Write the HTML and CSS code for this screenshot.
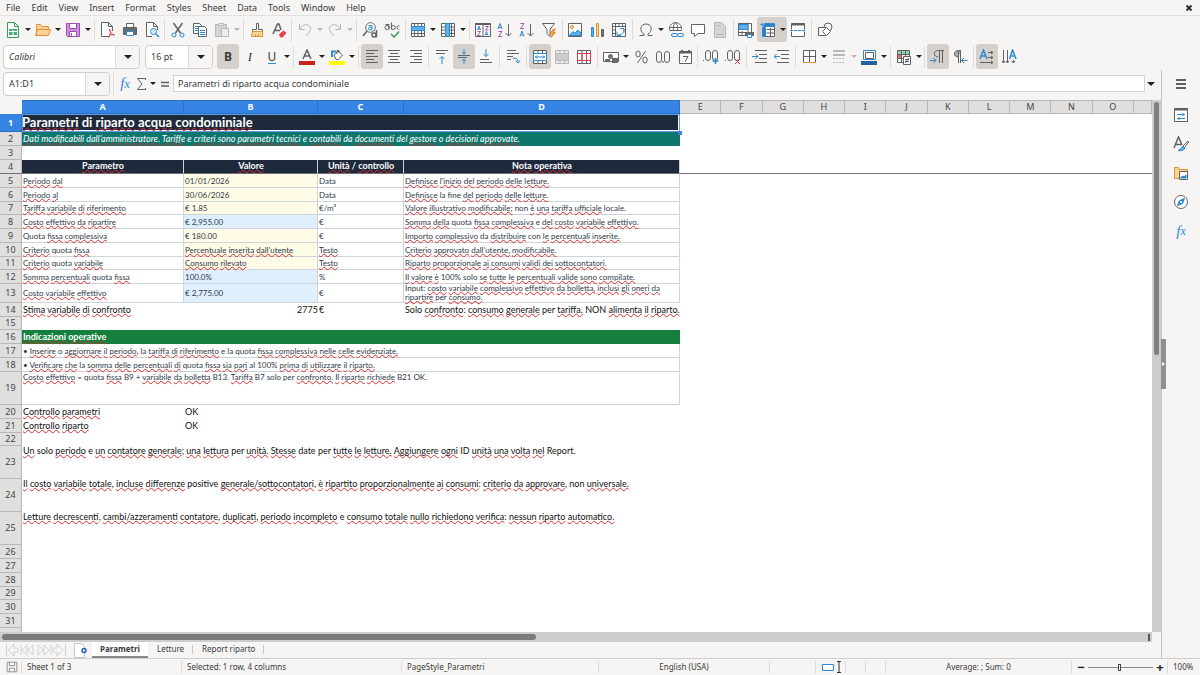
FILE: index.html
```html
<!DOCTYPE html>
<html lang="it">
<head>
<meta charset="utf-8">
<meta name="viewport" content="width=device-width, initial-scale=1">
<title>Parametri di riparto acqua condominiale</title>
<link rel="stylesheet" href="styles.css">
</head>
<body>
<header>
<nav class="menubar">
<button>File</button><button>Edit</button><button>View</button><button>Insert</button><button>Format</button><button>Styles</button><button>Sheet</button><button>Data</button><button>Tools</button><button>Window</button><button>Help</button>
<button class="close" aria-label="Close document"><svg class="ic small" viewBox="0 0 8 8"><path class="k w2" d="M1.5 1.5l5 5m0-5l-5 5"/></svg></button>
</nav>

<div class="toolbar standard">
<button class="tb" aria-label="New"><svg class="ic" viewBox="0 0 16 16"><path class="gn" fill="#fff" d="M2.500.5h7l4 4v11h-11z"/><path class="gn" d="M9.500.5v4h4"/><path fill="#44b171" stroke="none" d="M4 7h8v6H4z"/><path stroke="#fff" d="M4 9.500h8M8 8v5"/></svg></button><button class="dd" aria-label="New options"></button>
<button class="tb" aria-label="Open"><svg class="ic" viewBox="0 0 16 16"><path class="or" fill="#fbd495" d="M1.500 13.500v-11h4l2 2h6v3M.5 13.500l2-6h13l-2 6z"/></svg></button><button class="dd" aria-label="Open options"></button>
<button class="tb" aria-label="Save"><svg class="ic" viewBox="0 0 16 16"><path stroke="#9b4fb0" fill="#cf8edf" d="M1.500 1.500h13v13h-12l-1-1z"/><path stroke="#9b4fb0" fill="#fff" d="M4.500 1.500h7v5h-7zM4.500 9.500h7v5h-7z"/><path stroke="#9b4fb0" d="M6.500 11v3.500"/></svg></button><button class="dd" aria-label="Save options"></button>
<i class="sep"></i>
<button class="tb" aria-label="Export as PDF"><svg class="ic" viewBox="0 0 16 16"><path fill="#fff" d="M12.500 9V4.500l-4-4h-7v14h7M8.500.5v4h4"/><path class="rd" d="M9.500 7c1 4 2 5 5 6-3-1-5 0-6 2.500 2-3 2.500-5 1-8.500z"/></svg></button>
<button class="tb" aria-label="Print"><svg class="ic" viewBox="0 0 16 16"><path fill="#fff" d="M4.500 1.500h7v4h-7z"/><path fill="#666c72" d="M1.500 5.500h13v7h-13z"/><path class="b" fill="#fff" d="M4.500 9.500h7v4h-7z"/></svg></button>
<button class="tb" aria-label="Print preview"><svg class="ic" viewBox="0 0 16 16"><path fill="#fff" d="M13.500 8V4.500l-4-4h-7v14H8M9.500.5v4h4"/><circle class="b" fill="#d6ecfa" cx="9.500" cy="9.500" r="3"/><path class="b w15" d="M12 12l3 3"/></svg></button>
<i class="sep"></i>
<button class="tb" aria-label="Cut"><svg class="ic" viewBox="0 0 16 16"><path class="w15" d="M3.500 1l7 10M12.500 1l-7 10"/><circle class="b" cx="4" cy="13" r="2"/><circle class="b" cx="12" cy="13" r="2"/></svg></button>
<button class="tb" aria-label="Copy"><svg class="ic" viewBox="0 0 16 16"><path fill="#fff" d="M1.500 1.500h6l2 2v8h-8z"/><path fill="#fff" d="M6.500 4.500h6l2 2v8h-8z"/><path class="b" d="M3 4.500h3M3 6.500h3M3 8.500h3M8 8.500h5M8 10.500h5M8 12.500h5"/></svg></button>
<button class="tb" aria-label="Paste"><svg class="ic" viewBox="0 0 16 16"><path class="lg" fill="#d5d5d3" d="M1.500 2.500h11v12h-11z"/><path class="lg" fill="#eee" d="M4.500 1.500h5v2h-5zM7.500 6.500h7v8h-7z"/></svg></button><button class="dd off" aria-label="Paste options"></button>
<i class="sep"></i>
<button class="tb" aria-label="Clone formatting"><svg class="ic" viewBox="0 0 16 16"><path fill="#fff" d="M7.500 1.500h2v6h4v2h-10v-2h4z"/><path class="or" fill="#fbd495" d="M3.500 9.500h10v5h-11zM6.500 12v2M9.500 12v2"/></svg></button>
<button class="tb" aria-label="Clear formatting"><svg class="ic" viewBox="0 0 16 16"><path class="w15" d="M2 12L6.500 2H8l2 6M4 8.500h5"/><path fill="#e8404a" stroke="#e8404a" d="M8.500 12.500l4-3.500 2.500 2-3.500 4h-2z"/></svg></button>
<i class="sep"></i>
<button class="tb" aria-label="Undo"><svg class="ic" viewBox="0 0 16 16"><path class="lg" d="M2.500 2v5.500H8M3 7c2-4 5-5 8-4 4 2 3 6-2 11"/></svg></button><button class="dd off" aria-label="Undo list"></button>
<button class="tb" aria-label="Redo"><svg class="ic" viewBox="0 0 16 16"><path class="lg" d="M13.500 2v5.500H8M13 7c-2-4-5-5-8-4-4 2-3 6 2 11"/></svg></button><button class="dd off" aria-label="Redo list"></button>
<i class="sep"></i>
<button class="tb" aria-label="Find and replace"><svg class="ic" viewBox="0 0 16 16"><circle fill="#fff" cx="8.500" cy="5.500" r="4.800"/><path class="w15" d="M5 9l-4 5"/><circle class="b" cx="8" cy="6.500" r="1.500"/><path class="b" d="M6.500 3.500h3.500v5"/><circle class="w15" cx="12" cy="13" r="2"/><path class="w15" d="M14.500 8v7.500"/></svg></button>
<button class="tb" aria-label="Spelling"><svg class="ic" viewBox="0 0 16 16"><circle cx="3" cy="5.500" r="2"/><path d="M1.500 2.500h3.500v5M7.500.5v7"/><circle cx="9.300" cy="5.500" r="2"/><path d="M15.500 4c-3-1.500-3.500 4-.2 3.300"/><path class="gn w15" d="M7 12l3 3 5-5.500"/></svg></button>
<i class="sep"></i>
<button class="tb" aria-label="Row"><svg class="ic" viewBox="0 0 16 16"><path fill="#fff" d="M1.500 1.500h13v13h-13zM1.500 11.500h13M4.500 1.500v13M8 1.500v13M11.500 1.500v13"/><path class="b" fill="#5fb0ea" d="M1.500 4.500h13v4h-13z"/></svg></button><button class="dd" aria-label="Row options"></button>
<button class="tb" aria-label="Column"><svg class="ic" viewBox="0 0 16 16"><path fill="#fff" d="M1.500 1.500h13v13h-13zM1.500 5h13M1.500 8h13M1.500 11.500h13M11.500 1.500v13"/><path class="b" fill="#5fb0ea" d="M5.500 1.500h4v13h-4z"/></svg></button><button class="dd" aria-label="Column options"></button>
<i class="sep"></i>
<button class="tb" aria-label="Sort"><svg class="ic" viewBox="0 0 16 16"><path fill="#fff" d="M.5 1.500h15v13H.5zM8 2v12"/><path class="w2" d="M.5 2h15"/><path class="b" d="M2.500 8l1.500-4 1.500 4M3 7h2M10 13.500l1.500-4 1.500 4M10.500 12.500h2"/><path class="pu" d="M2.500 9.500h3l-3 4h3M10.500 4.500h3l-3 3.500h3"/></svg></button>
<button class="tb" aria-label="Sort ascending"><svg class="ic" viewBox="0 0 16 16"><path class="b" d="M1 7l2-5.500L5 7M2 5.500h2"/><path class="pu" d="M1.500 9.500h3.500l-3.500 5H5"/><path d="M11.500 2v12M8.500 11l3 3 3-3"/></svg></button>
<button class="tb" aria-label="Sort descending"><svg class="ic" viewBox="0 0 16 16"><path class="pu" d="M1.500 1.500H5l-3.500 5H5"/><path class="b" d="M1 14.500L3 9l2 5.500M2 13h2"/><path d="M11.500 2v12M8.500 11l3 3 3-3"/></svg></button>
<button class="tb" aria-label="AutoFilter"><svg class="ic" viewBox="0 0 16 16"><path fill="#fff" d="M1.500 1.500h12l-4.500 6v7l-3-3v-4z"/><path class="or" fill="#f59b23" d="M12.500 7l-4 5h3l-1.500 3.500 4.500-5h-2.500l2.500-3.500z"/></svg></button>
<i class="sep"></i>
<button class="tb" aria-label="Insert image"><svg class="ic" viewBox="0 0 16 16"><path fill="#fff" d="M1.500 1.500h13v13h-13z"/><circle class="or" fill="#fbd495" cx="5" cy="5" r="1.500"/><path class="b" fill="#5fb0ea" d="M2 13.500l4-4 2 1.500 3-3 3 3v2.500z"/></svg></button>
<button class="tb" aria-label="Insert chart"><svg class="ic" viewBox="0 0 16 16"><path class="b" fill="#5fb0ea" d="M2.500 5.500h2v9h-2z"/><path class="or" fill="#fbd495" d="M7.500 1.500h2v13h-2z"/><path fill="#777" d="M12.500 7.500h2v7h-2z"/></svg></button>
<button class="tb" aria-label="Insert pivot table"><svg class="ic" viewBox="0 0 16 16"><path fill="#fff" d="M1.500 1.500h13v13h-13zM1.500 4.500h13M4.500 1.500v13M8 2v2M11.500 2v2M2 8h2M2 11.500h2"/><path class="b" d="M9 6.500h4v4M6 9.500v4h4M13 7c0 4-2 6-6 6"/></svg></button>
<i class="sep"></i>
<button class="tb" aria-label="Special character"><svg class="ic" viewBox="0 0 16 16"><path d="M1.500 13.500H6v-1.500C1 9 2 2 8 2s7 7 2 10v1.500h4.500"/></svg></button><button class="dd" aria-label="Recent characters"></button>
<button class="tb" aria-label="Hyperlink"><svg class="ic" viewBox="0 0 16 16"><path fill="#fff" d="M2 9a6 6 0 1 1 11 0M2 5.500h11M2 8.500h11M7.500.5C5 3 5 7 6 9M7.500.5C10 3 10 7 9 9"/><rect class="b" x="3.500" y="11.500" width="6" height="3" rx="1.500"/><rect class="b" x="9.500" y="11.500" width="6" height="3" rx="1.500"/></svg></button>
<button class="tb" aria-label="Comment"><svg class="ic" viewBox="0 0 16 16"><path fill="#fff" d="M1.500 2.500h13v9H8l-3.500 3v-3h-3z"/></svg></button>
<button class="tb" aria-label="Headers and footers"><svg class="ic" viewBox="0 0 16 16"><path class="lg" fill="#d5d5d3" d="M2.500.5h7l4 4v11h-11z"/><path class="lg" d="M4.500 3.500h4M4.500 12.500h7"/></svg></button>
<i class="sep"></i>
<button class="tb" aria-label="Print area"><svg class="ic" viewBox="0 0 16 16"><path fill="#fff" d="M.5 1.500h13v12H.5zM.5 10.500h13M4 9v5M10 1.500v9"/><path class="b" fill="#5fb0ea" d="M1 2.500h9v5H1z"/><path fill="#666c72" d="M7.500 10.500h8v3h-8z"/><path class="b" fill="#fff" d="M9.500 12.500h4v3h-4z"/></svg></button>
<span class="on split"><button class="tb" aria-label="Freeze rows and columns"><svg class="ic" viewBox="0 0 16 16"><path fill="#fff" d="M3.500 3.500h11v11h-11zM6.500 7.500h8M6.500 11h8M10.500 6v8"/><path class="b" fill="#2b7fc4" d="M4.500 1.500h10v3h-10zM2.500 5.500h3v9h-3z"/><path class="b" d="M.5 2.500h3M2 1v3"/></svg></button><button class="dd" aria-label="Freeze options"></button></span>
<button class="tb" aria-label="Split window"><svg class="ic" viewBox="0 0 16 16"><path fill="#fff" d="M1.500 1.500h13v13h-13z"/><path class="w2" d="M1.500 2.500h13"/><path stroke="#f6f5f4" class="w2" d="M0 8.500h16"/><path class="b" stroke-dasharray="3 1" d="M0 8.500h16"/></svg></button>
<i class="sep"></i>
<button class="tb" aria-label="Show draw functions"><svg class="ic" viewBox="0 0 16 16"><circle cx="11" cy="5" r="4"/><path fill="#f6f5f4" d="M1.500 5.500h7v8h-7z"/><path fill="#fff" d="M9.500 5.500l4 4-4 4-4-4z"/></svg></button>
</div>

<div class="toolbar formatting">
<div class="combo fontname"><input aria-label="Font name" value="Calibri"><button aria-label="Font list"></button></div>
<div class="combo fontsize"><input aria-label="Font size" value="16 pt"><button aria-label="Size list"></button></div>
<button class="tb on bold">B</button>
<button class="tb ital">I</button>
<button class="tb under"><span>U</span></button><button class="dd" aria-label="Underline options"></button>
<i class="sep"></i>
<button class="tb" aria-label="Font color"><svg class="ic" viewBox="0 0 16 16"><path class="w15" d="M4 10l4-9 4 9M5.500 7h5"/><path fill="#c9211e" stroke="none" d="M0 12h16v4H0z"/></svg></button><button class="dd" aria-label="Font color options"></button>
<button class="tb" aria-label="Background color"><svg class="ic" viewBox="0 0 16 16"><path fill="#fff" d="M5 6l4-4 4.500 4-4 4.500H7z"/><path d="M8 5V1.500h2V4"/><path class="b w2" d="M3 8V2.500h4"/><path fill="#ff0" stroke="none" d="M0 12h16v4H0z"/></svg></button><button class="dd" aria-label="Background color options"></button>
<i class="sep"></i>
<button class="tb on" aria-label="Align left"><svg class="ic" viewBox="0 0 16 16"><path d="M2 1.500h12M2 4.500h8M2 7.500h12M2 10.500h8M2 13.500h12"/></svg></button>
<button class="tb" aria-label="Center"><svg class="ic" viewBox="0 0 16 16"><path d="M2 1.500h12M4 4.500h8M2 7.500h12M4 10.500h8M2 13.500h12"/></svg></button>
<button class="tb" aria-label="Align right"><svg class="ic" viewBox="0 0 16 16"><path d="M2 1.500h12M6 4.500h8M2 7.500h12M6 10.500h8M2 13.500h12"/></svg></button>
<i class="sep"></i>
<button class="tb" aria-label="Align top"><svg class="ic" viewBox="0 0 16 16"><path d="M2 1.500h12M2 4.500h9"/><path class="b" d="M8 15V7.500M5.500 10L8 7.500l2.500 2.500"/></svg></button>
<button class="tb on" aria-label="Center vertically"><svg class="ic" viewBox="0 0 16 16"><path d="M2 6.500h12M2 8.500h9"/><path class="b" d="M8 0v5M6 3l2 2 2-2M8 15v-5M6 12l2-2 2 2"/></svg></button>
<button class="tb" aria-label="Align bottom"><svg class="ic" viewBox="0 0 16 16"><path d="M2 10.500h9M2 13.500h12"/><path class="b" d="M8 0v7.500M5.500 5L8 7.500 10.500 5"/></svg></button>
<i class="sep"></i>
<button class="tb" aria-label="Wrap text"><svg class="ic" viewBox="0 0 16 16"><path d="M2 1.500h9M2 4.500h12M2 7.500h6M2 10.500h4"/><path class="b" d="M8 9.500c3-1 5 0 5 4M10.500 11.500l2.500 2.500 2-2.500"/></svg></button>
<i class="sep"></i>
<button class="tb on" aria-label="Merge and center"><svg class="ic" viewBox="0 0 16 16"><path fill="#fff" d="M1.500 1.500h13v13h-13zM6 1.500v13M10.500 1.500v13M1.500 4.500h13M1.500 11.500h13"/><path class="b" fill="#fff" d="M1.500 4.500h13v7h-13zM3 8h10M5 6.500L3.500 8 5 9.500M11 6.500L12.500 8 11 9.500"/></svg></button>
<button class="tb" aria-label="Merge cells"><svg class="ic" viewBox="0 0 16 16"><path class="lg" fill="#eee" d="M1.500 1.500h13v13h-13zM6 1.500v3M10.500 1.500v3M6 11.500v3M10.500 11.500v3"/><path class="lg" fill="#ccc" d="M1.500 4.500h13v7h-13z"/></svg></button>
<button class="tb" aria-label="Unmerge cells"><svg class="ic" viewBox="0 0 16 16"><path fill="#fff" d="M1.500 1.500h13v13h-13zM6 1.500v13M10.500 1.500v13"/><path class="rd" d="M1.500 4.500h13v7h-13zM6 4.500v7M10.500 4.500v7"/></svg></button>
<i class="sep"></i>
<button class="tb" aria-label="Currency"><svg class="ic" viewBox="0 0 16 16"><path fill="#fff" d="M.5 3.500h15v9H.5z"/><circle fill="#777" cx="7.500" cy="7.500" r="2"/><path fill="#666c72" d="M9.500 9.500h5v4h-5zM2.500 10.500h4v2h-4z"/></svg></button><button class="dd" aria-label="Currency options"></button>
<button class="tb" aria-label="Percent"><svg class="ic" viewBox="0 0 16 16"><path d="M12.500 2l-8 12"/><ellipse cx="5" cy="5" rx="2.200" ry="3"/><ellipse cx="12" cy="11" rx="2.200" ry="3"/></svg></button>
<button class="tb" aria-label="Number"><svg class="ic" viewBox="0 0 16 16"><rect x="1.500" y="2.500" width="5" height="11" rx="2.500"/><rect x="9.500" y="2.500" width="5" height="11" rx="2.500"/><path d="M8 12v2"/></svg></button>
<button class="tb" aria-label="Date"><svg class="ic" viewBox="0 0 16 16"><path fill="#fff" d="M2.500 2.500h12v12h-12z"/><path class="w2" d="M2 3.500h13M5 1v3M12 1v3"/><path d="M6 7.500h5l-3 5.500"/></svg></button>
<i class="sep"></i>
<button class="tb" aria-label="Add decimal place"><svg class="ic" viewBox="0 0 16 16"><rect x="2.500" y="1.500" width="5" height="10" rx="2.500"/><rect x="9.500" y="1.500" width="5" height="10" rx="2.500"/><path d="M0 11.500h1"/><path class="b w15" d="M12.500 9v6M9.500 12h6"/></svg></button>
<button class="tb" aria-label="Delete decimal place"><svg class="ic" viewBox="0 0 16 16"><rect x="2.500" y="1.500" width="5" height="10" rx="2.500"/><rect x="9.500" y="1.500" width="5" height="10" rx="2.500"/><path d="M0 11.500h1"/><path class="rd" d="M10 10l5 5m0-5l-5 5"/></svg></button>
<i class="sep"></i>
<button class="tb" aria-label="Increase indent"><svg class="ic" viewBox="0 0 16 16"><path d="M3 1.500h12M7 5.500h8M7 9.500h8M3 13.500h12"/><path class="b" d="M0 7.500h6M3.500 5L6 7.500 3.500 10"/></svg></button>
<button class="tb" aria-label="Decrease indent"><svg class="ic" viewBox="0 0 16 16"><path d="M3 1.500h12M7 5.500h8M7 9.500h8M3 13.500h12"/><path class="b" d="M0 7.500h6M2.500 5L0 7.500 2.500 10"/></svg></button>
<i class="sep"></i>
<button class="tb" aria-label="Borders"><svg class="ic" viewBox="0 0 16 16"><path fill="#fff" d="M2.500 1.500h12v12h-12zM8.500 1.500v12M2.500 7.500h12"/><path class="or" d="M2 13.500h13"/></svg></button><button class="dd" aria-label="Borders options"></button>
<button class="tb" aria-label="Border style"><svg class="ic" viewBox="0 0 16 16"><path class="lg w2" d="M2 2h12M2 6h12"/><path class="lg" stroke-dasharray="2 1" d="M2 9.500h12M2 13.500h12"/></svg></button><button class="dd off" aria-label="Border style options"></button>
<button class="tb" aria-label="Border color"><svg class="ic" viewBox="0 0 16 16"><path class="b" fill="#fff" d="M2.500 1.500h12v9h-12z"/><path d="M4.500 3.500h8v6h-8z"/><path fill="#23629f" stroke="none" d="M0 12h16v4H0z"/></svg></button><button class="dd" aria-label="Border color options"></button>
<i class="sep"></i>
<button class="tb" aria-label="Conditional formatting"><svg class="ic" viewBox="0 0 16 16"><path fill="#8fd5a6" stroke="none" d="M1 1h12v4H1z"/><path fill="#ee6c6c" stroke="none" d="M1 5h4v5H1z"/><path d="M1.500 1.500h12v12h-12zM5.500 1.500v12M9.500 1.500v12M1.500 5.500h12M1.500 9.500h12"/><path fill="#fff" d="M7.500 7.500h7v8h-7zM9 10.500h4M9 12.500h4M12.500 9l-3 5"/></svg></button><button class="dd" aria-label="Conditional options"></button>
<i class="sep"></i>
<button class="tb on" aria-label="Left to right"><svg class="ic" viewBox="0 0 16 16"><path d="M8.500 8C3 8 3 1.500 8.500 1.500H14M9.500 2v12M12.500 2v12"/><path class="b" d="M0 11.500h6M3.500 9L6 11.500 3.500 14"/></svg></button>
<button class="tb" aria-label="Right to left"><svg class="ic" viewBox="0 0 16 16"><path fill="#aaa" d="M6.500 8C1 8 1 1.500 6.500 1.500H9M6.500 2v12M8.500 2v12"/><path class="b" d="M9.500 11.500h6M12 9l-2.500 2.500L12 14"/></svg></button>
<i class="sep"></i>
<button class="tb on" aria-label="Text direction horizontal"><svg class="ic" viewBox="0 0 16 16"><path class="b w15" d="M1 10l3.500-9L8 10M2.500 7h4"/><path d="M9 3.500h5M9 8.500h5M1 13.500h13M12 2l2 1.500L12 5M12 7l2 1.500-2 1.500M12 12l2 1.500-2 1.500"/></svg></button>
<button class="tb" aria-label="Text direction vertical"><svg class="ic" viewBox="0 0 16 16"><path class="b w15" d="M8.500 10l3-9 3.500 9M10 7h4"/><path d="M2.500 1v13M6.500 1v13M12.500 11v3M1 12l1.500 2L4 12M5 12l1.500 2L8 12M11 12l1.500 2 1.500-2"/></svg></button>
</div>
</header>

<div class="work">
<main class="doc">
<div class="formulabar">
<div class="combo namebox"><input aria-label="Name box" value="A1:D1"><button aria-label="Names"></button></div>
<i class="sep"></i>
<button class="fx" aria-label="Function wizard">f<sub>x</sub></button>
<button class="tool" aria-label="Sum"><svg class="ic" viewBox="0 0 16 16"><path d="M12.500 4V2.500h-8L9 8l-4.500 5.500h8V12"/></svg></button><button class="dd" aria-label="Sum options"></button>
<button class="tool eq" aria-label="Formula"><svg class="ic" viewBox="0 0 16 16"><path class="w15" d="M4 6.500h8M4 10h8"/></svg></button>
<input class="formula" aria-label="Input line" value="Parametri di riparto acqua condominiale">
<button class="expand" aria-label="Expand formula bar"></button>
</div>

<div class="sheetarea">
<div class="sheet">
<table>
<colgroup><col class="c0"><col class="ca"><col class="cb"><col class="cc"><col class="cd"><col><col><col><col><col><col><col><col><col><col><col><col class="ce"></colgroup>
<thead><tr><th class="corner"></th><th class="sel">A</th><th class="sel">B</th><th class="sel">C</th><th class="sel">D</th><th>E</th><th>F</th><th>G</th><th>H</th><th>I</th><th>J</th><th>K</th><th>L</th><th>M</th><th>N</th><th>O</th><th></th></tr></thead>
<tbody>
<tr class="r18"><th class="sel">1</th><td colspan="4" class="title"><u>Parametri</u> di <u>riparto</u> <u>acqua</u> <u>condominiale</u><i class="handle"></i></td></tr>
<tr><th>2</th><td colspan="4" class="subtitle"><u>Dati</u> <u>modificabili</u> <u>dall’amministratore.</u> <u>Tariffe</u> e <u>criteri</u> <u>sono</u> <u>parametri</u> <u>tecnici</u> e <u>contabili</u> da <u>documenti</u> del <u>gestore</u> o <u>decisioni</u> <u>approvate.</u></td></tr>
<tr><th>3</th></tr>
<tr class="heads"><th>4</th><td><u>Parametro</u></td><td><u>Valore</u></td><td><u>Unità</u> / <u>controllo</u></td><td><u>Nota</u> <u>operativa</u></td><td colspan="12" class="rest"></td></tr>
<tr class="bx"><th>5</th><td><u>Periodo</u> <u>dal</u></td><td class="ye">01/01/2026</td><td>Data</td><td><u>Definisce</u> <u>l’inizio</u> <u>del</u> <u>periodo</u> <u>delle</u> <u>letture.</u></td></tr>
<tr class="bx"><th>6</th><td><u>Periodo</u> <u>al</u></td><td class="ye">30/06/2026</td><td>Data</td><td><u>Definisce</u> la fine <u>del</u> <u>periodo</u> <u>delle</u> <u>letture.</u></td></tr>
<tr class="bx r13"><th>7</th><td><u>Tariffa</u> <u>variabile</u> <u>di</u> <u>riferimento</u></td><td class="ye">€ 1.85</td><td>€/m³</td><td><u>Valore</u> <u>illustrativo</u> <u>modificabile;</u> non <u>è</u> <u>una</u> <u>tariffa</u> <u>ufficiale</u> locale.</td></tr>
<tr class="bx"><th>8</th><td><u>Costo</u> <u>effettivo</u> <u>da</u> <u>ripartire</u></td><td class="bl">€ 2,955.00</td><td>€</td><td><u>Somma</u> <u>della</u> quota <u>fissa</u> <u>complessiva</u> e <u>del</u> <u>costo</u> <u>variabile</u> <u>effettivo.</u></td></tr>
<tr class="bx"><th>9</th><td>Quota <u>fissa</u> <u>complessiva</u></td><td class="ye">€ 180.00</td><td>€</td><td><u>Importo</u> <u>complessivo</u> da <u>distribuire</u> con <u>le</u> <u>percentuali</u> <u>inserite.</u></td></tr>
<tr class="bx"><th>10</th><td><u>Criterio</u> quota <u>fissa</u></td><td class="ye"><u>Percentuale</u> <u>inserita</u> <u>dall’utente</u></td><td><u>Testo</u></td><td><u>Criterio</u> <u>approvato</u> <u>dall’utente,</u> <u>modificabile.</u></td></tr>
<tr class="bx r13"><th>11</th><td><u>Criterio</u> quota <u>variabile</u></td><td class="ye"><u>Consumo</u> <u>rilevato</u></td><td><u>Testo</u></td><td><u>Riparto</u> <u>proporzionale</u> <u>ai</u> <u>consumi</u> <u>validi</u> <u>dei</u> <u>sottocontatori.</u></td></tr>
<tr class="bx"><th>12</th><td><u>Somma</u> <u>percentuali</u> quota <u>fissa</u></td><td class="bl">100.0%</td><td>%</td><td><u>Il</u> <u>valore</u> <u>è</u> 100% solo <u>se</u> <u>tutte</u> <u>le</u> <u>percentuali</u> <u>valide</u> <u>sono</u> <u>compilate.</u></td></tr>
<tr class="bx r19"><th>13</th><td><u>Costo</u> <u>variabile</u> <u>effettivo</u></td><td class="bl">€ 2,775.00</td><td>€</td><td class="two">Input: <u>costo</u> <u>variabile</u> <u>complessivo</u> <u>effettivo</u> <u>da</u> <u>bolletta,</u> <u>inclusi</u> <u>gli</u> <u>oneri</u> <u>da</u><br><u>ripartire</u> per <u>consumo.</u></td></tr>
<tr class="pl"><th>14</th><td><u>Stima</u> <u>variabile</u> <u>di</u> <u>confronto</u></td><td class="num">2775</td><td>€</td><td>Solo <u>confronto</u>: <u>consumo</u> <u>generale</u> per <u>tariffa.</u> NON <u>alimenta</u> <u>il</u> <u>riparto.</u></td></tr>
<tr class="r13"><th>15</th></tr>
<tr><th>16</th><td colspan="4" class="green"><u>Indicazioni</u> <u>operative</u></td></tr>
<tr class="bx"><th>17</th><td colspan="4">• <u>Inserire</u> o <u>aggiornare</u> <u>il</u> <u>periodo</u>, la <u>tariffa</u> <u>di</u> <u>riferimento</u> e la quota <u>fissa</u> <u>complessiva</u> <u>nelle</u> <u>celle</u> <u>evidenziate.</u></td></tr>
<tr class="bx"><th>18</th><td colspan="4">• <u>Verificare</u> <u>che</u> la <u>somma</u> <u>delle</u> <u>percentuali</u> <u>di</u> quota <u>fissa</u> <u>sia</u> <u>pari</u> al 100% <u>prima</u> <u>di</u> <u>utilizzare</u> <u>il</u> <u>riparto.</u></td></tr>
<tr class="bx r33"><th>19</th><td colspan="4"><u>Costo</u> <u>effettivo</u> = quota <u>fissa</u> B9 + <u>variabile</u> <u>da</u> <u>bolletta</u> B13. <u>Tariffa</u> B7 solo per <u>confronto.</u> <u>Il</u> <u>riparto</u> <u>richiede</u> B21 OK.</td></tr>
<tr class="pl"><th>20</th><td><u>Controllo</u> <u>parametri</u></td><td>OK</td></tr>
<tr class="pl"><th>21</th><td><u>Controllo</u> <u>riparto</u></td><td>OK</td></tr>
<tr class="r13"><th>22</th></tr>
<tr class="pl r33"><th>23</th><td colspan="4"><u>Un</u> solo <u>periodo</u> e <u>un</u> <u>contatore</u> <u>generale</u>; <u>una</u> <u>lettura</u> per <u>unità.</u> <u>Stesse</u> date per <u>tutte</u> <u>le</u> <u>letture.</u> <u>Aggiungere</u> <u>ogni</u> ID <u>unità</u> <u>una</u> <u>volta</u> <u>nel</u> Report.</td></tr>
<tr class="pl r33"><th>24</th><td colspan="4"><u>Il</u> <u>costo</u> <u>variabile</u> <u>totale</u>, <u>incluse</u> <u>differenze</u> positive <u>generale/sottocontatori</u>, <u>è</u> <u>ripartito</u> <u>proporzionalmente</u> <u>ai</u> <u>consumi</u>: <u>criterio</u> <u>da</u> <u>approvare</u>, non <u>universale.</u></td></tr>
<tr class="pl r33"><th>25</th><td colspan="4"><u>Letture</u> <u>decrescenti</u>, <u>cambi/azzeramenti</u> <u>contatore</u>, <u>duplicati</u>, <u>periodo</u> <u>incompleto</u> e <u>consumo</u> <u>totale</u> <u>nullo</u> <u>richiedono</u> <u>verifica</u>: <u>nessun</u> <u>riparto</u> <u>automatico.</u></td></tr>
<tr><th>26</th></tr>
<tr><th>27</th></tr>
<tr><th>28</th></tr>
<tr class="r13"><th>29</th></tr>
<tr><th>30</th></tr>
<tr><th>31</th></tr>
<tr><th></th></tr>
</tbody>
</table>
</div>
<div class="vscroll"><i></i></div>
<div class="hscroll"><i></i><b></b></div>
</div>

<div class="tabs">
<svg class="nav" viewBox="0 0 62 14"><path d="M1.500 1v12M9 1L3 7l6 6V9h4V5H9zM16 2v10M22 2l-5 5 5 5zM28 2l-5 5 5 5zM33 2l5 5-5 5zM39 2l5 5-5 5zM46 2v10M52 1l6 6-6 6V9h-4V5h4zM60.500 1v12"/></svg>
<button class="add" aria-label="Add sheet"><svg class="ic" viewBox="0 0 16 16"><path stroke="#c8c8c8" fill="#fff" d="M2.500 1.500h7l3 3v11h-10z"/><circle stroke="#2a62b0" class="w15" cx="12" cy="8.500" r="2"/></svg></button>
<button class="tab active">Parametri</button><button class="tab">Letture</button><button class="tab">Report riparto</button>
</div>
</main>

<aside class="side">
<button aria-label="Sidebar settings"><svg class="ic" viewBox="0 0 16 16"><path class="k w15" d="M3 4h10M3 8h10M3 12h10"/></svg></button>
<button aria-label="Properties"><svg class="ic" viewBox="0 0 16 16"><path fill="#fff" d="M1.500 1.500h13v13h-13z"/><path class="w2" d="M1 2.500h14"/><path class="b" d="M4 7.500h8M10 6v3M4 11.500h8M6 10v3"/></svg></button>
<button aria-label="Styles"><svg class="ic" viewBox="0 0 16 16"><path class="w15" d="M1 12L5.500 1 9 9M3 8.500h5"/><path fill="#fff" d="M15 5l-5 5 1.500 1.500L15.500 6z"/><path class="b" fill="#5fb0ea" d="M10 10.500l2 1.500c-1 2.500-4 3-7 2.500 2-.5 3-3.500 5-4z"/></svg></button>
<button aria-label="Gallery"><svg class="ic" viewBox="0 0 16 16"><path class="or" fill="#fbd495" d="M1.500 13.500v-11h4l1 2h8v9z"/><path fill="#fff" d="M6.500 6.500h8v8h-8z"/><path class="b" fill="#2b7fc4" d="M7.500 13l2-2 1.500 1 2-2v3z"/></svg></button>
<button aria-label="Navigator"><svg class="ic" viewBox="0 0 16 16"><circle fill="#fff" cx="8" cy="8" r="6.500"/><path class="b" fill="#2b8ad4" d="M11.500 4.500l-2 5-5 2 2-5z"/><circle fill="#fff" stroke="none" cx="8" cy="8" r="1"/></svg></button>
<button class="fx" aria-label="Functions">f<sub>x</sub></button>
<i class="grip"></i>
</aside>
</div>

<footer class="status">
<span class="s0"><svg class="ic" viewBox="0 0 16 16"><path stroke="#888" d="M2.500 2.500h11v11h-11zM5 2.500v4h6v-4M5 13.500v-4h6v4"/></svg></span>
<span class="s1">Sheet 1 of 3</span>
<span class="s2">Selected: 1 row, 4 columns</span>
<span class="s3">PageStyle_Parametri</span>
<span class="s4">English (USA)</span>
<span class="s5"></span>
<span class="s6"><svg class="sm" viewBox="0 0 20 12"><path class="b" fill="#fff" d="M.5 3.500h11v6H.5z"/><path class="k" d="M15 .5h4M17 .5v11M15 11.500h4"/></svg></span>
<span class="s7"></span><span class="s7"></span>
<span class="s8">Average: ; Sum: 0</span>
<span class="s9"><button aria-label="Zoom out">−</button><input type="range" aria-label="Zoom" min="0" max="100" value="49"><button aria-label="Zoom in">+</button></span>
<span class="s10">100%</span>
</footer>
</body>
</html>
```
FILE: styles.css
```css
* { box-sizing: border-box; }
html, body { height: 100%; }
body {
  margin: 0; display: flex; flex-direction: column; overflow: hidden;
  background: #f6f5f4; color: #3a3a3a;
  font: 8px/12px "Noto Sans", sans-serif;
}
button, input { font: inherit; color: inherit; margin: 0; padding: 0; border: 0; background: none; outline: 0; min-width: 0; }
button { flex: none; display: flex; align-items: center; justify-content: center; }

.ic { width: 16px; height: 16px; fill: none; stroke: #5f6265; flex: none; display: block; }
.ic.small { width: 8px; height: 8px; }
svg .b { stroke: #2b8ad4; }
svg .gn { stroke: #2f9e5b; }
svg .or { stroke: #e0913a; }
svg .rd { stroke: #dc3c46; }
svg .pu { stroke: #b04fc0; }
svg .lg { stroke: #b9b8b6; }
svg .k { stroke: #2e2e2e; }
svg .w15 { stroke-width: 1.5; }
svg .w2 { stroke-width: 2; }

.menubar { display: flex; height: 16px; padding: 0 7px 0 6px; border-bottom: 1px solid #e3e1df; font-size: 9px; gap: 11px; }
.menubar .close { margin-left: auto; }
.toolbar { display: flex; align-items: center; height: 27px; padding-left: 2px; }
.standard { max-width: 836px; }
.formatting { max-width: 1020px; }
.tb { width: 22px; height: 25px; border-radius: 3px; }
.on { background: #d5d0cc; border-radius: 3px; }
.split { display: flex; }
.sep { flex: 1 1 5px; height: 22px; background: linear-gradient(#dfdddb, #dfdddb) center / 1px 100% no-repeat; }
.dd { width: 8px; height: 24px; }
.dd::before, .combo button::before, .expand::before {
  content: ""; border: 3px solid transparent; border-top-color: #222; border-bottom: 0;
}
.dd.off::before { border-top-color: #b9b8b6; }
.combo { display: flex; height: 24px; background: #fff; border: 1px solid #cfccc9; border-radius: 4px; flex: none; overflow: hidden; }
.combo input { flex: 1; padding-left: 5px; font-size: 9px; }
.combo button { width: 24px; background: #f6f5f4; border-left: 1px solid #dcdad8; }
.combo button::before, .expand::before { border-width: 4px 4px 0; }
.fontname { width: 137px; margin: 0 5px 0 1px; font-style: italic; }
.fontsize { width: 68px; margin-right: 4px; }
.bold { font-size: 12px; font-weight: 700; }
.ital { font: italic 13px "Liberation Serif", serif; }
.under { font-size: 12px; }
.under span { border-bottom: 1px solid #2b8ad4; line-height: 13px; }

.work { flex: 1; display: flex; min-height: 0; }
.doc { flex: 1; display: flex; flex-direction: column; min-width: 0; }
.formulabar { display: flex; align-items: center; height: 30px; padding: 0 4px 3px 3px; flex: none; }
.formulabar .sep { flex: none; width: 7px; }
.namebox { width: 107px; }
.fx { width: 16px; font: italic 15px "Liberation Serif", serif; color: #2b8ad4; }
.fx sub { font-size: 12px; line-height: 1; }
.tool { width: 16px; }
.eq { width: 16px; }
.formula { flex: 1; height: 17px; background: #fff; border: 1px solid #d5d3d1; padding-left: 4px; font-size: 9px; }
.expand { width: 12px; height: 20px; }

.sheetarea { flex: 1; display: grid; grid-template: minmax(0, 1fr) 10px / minmax(0, 1fr) 9px; min-height: 0; }
.sheet { overflow: hidden; background: #fff; }
table { width: 100%; table-layout: fixed; border-collapse: separate; border-spacing: 0; }
.c0 { width: 22px; }
.ca { width: 162px; }
.cb { width: 134px; }
.cc { width: 86px; }
.cd { width: 276px; }
.ce { width: 18px; }
th { padding: 0; background: #e0dfde; border: 0 solid #b9b8b7; border-width: 0 1px 1px 0; font-weight: 400; font-size: 9px; line-height: 12px; color: #444; }
thead th { border-top-width: 1px; }
thead tr, tbody tr { height: 14px; }
tbody tr.r13 { height: 13px; }
tbody tr.r18 { height: 18px; }
tbody tr.r19 { height: 19px; }
tbody tr.r33 { height: 33px; }
th.sel { background: #3584e4; color: #fff; font-weight: 700; border-color: #2a6fc4; }
th.corner { background: #f6f5f4; border-color: #f6f5f4; }
td { padding: 0 0 0 1px; font: 9px/10px Lato, sans-serif; white-space: nowrap; color: #2f3a48; }
td u { text-decoration: underline wavy #df2b2b 1px; text-underline-offset: 0; text-decoration-skip-ink: none; }
td.title { position: relative; padding: 0 0 2px; background: #1e293b; color: #fff; font-size: 13px; font-weight: 700; line-height: 15px; box-shadow: inset 0 0 0 1px #5d9fe9, inset -2px -2px 0 #fff; }
.handle { position: absolute; right: -2px; bottom: -3px; width: 4px; height: 4px; background: #3584e4; }
.subtitle { background: #0f766e; color: #fff; font-style: italic; }
.heads td { background: #1e293b; color: #fff; font-weight: 700; text-align: center; padding-bottom: 2px; border-right: 1px solid #cbd5e1; }
.heads td, .heads th { border-bottom: 1px solid #707070; }
.heads td.rest { background: #fff; border-right: 0; }
.bx td { font-size: 8px; border: 0 solid #cbd5da; border-width: 0 1px 1px 0; }
.r33 td { vertical-align: top; }
td.ye { background: #fffbe6; }
td.bl { background: #dfeffd; }
.bx td.two { line-height: 9px; }
.pl td { font-size: 9px; color: #111; }
.pl .num { text-align: right; }
td.green { background: #15803d; color: #fff; font-weight: 700; }

.vscroll { background: #cdcdcd; padding: 2px 2px; }
.vscroll i { display: block; height: 48%; border-radius: 3px; background: #7f7f7f; }
.hscroll { background: #cdcdcd; padding: 2px; display: flex; justify-content: space-between; }
.hscroll i { width: 46.5%; height: 6px; border-radius: 3px; background: #7a7a7a; }
.hscroll b { width: 2px; height: 7px; background: #555; }

.tabs { display: flex; height: 16px; flex: none; padding-left: 5px; }
.nav { width: 62px; height: 14px; fill: none; stroke: #d2d1cf; margin-top: 1px; }
.add { width: 25px; }
.tab { padding: 0 9px; border-bottom: 2px solid transparent; background: linear-gradient(#c9c7c5, #c9c7c5) right center / 1px 9px no-repeat; }
.tab.active { background: #fff; border-color: #888; font-weight: 700; padding: 0 8px; }

.side { position: relative; width: 39px; border-left: 1px solid #c9c7c5; display: flex; flex-direction: column; align-items: center; padding-top: 6px; gap: 13px; }
.side button { height: 16px; }
.side button:first-child { margin-bottom: 2px; }
.grip { position: absolute; left: -1px; top: 269px; width: 5px; height: 50px; background: #909090; }
.grip::before { content: ""; position: absolute; left: 1px; top: 23px; border: 2px solid transparent; border-left: 3px solid #fff; border-right: 0; }

.status { display: flex; align-items: center; height: 17px; flex: none; border-top: 1px solid #cfcdcb; font-size: 8px; }
.status > span { height: 12px; border-right: 1px solid #dddbd9; white-space: nowrap; flex: none; display: flex; align-items: center; }
.status .ic { width: 14px; height: 14px; margin-left: 5px; }
.status .s0 { width: 22px; }
.status .s1 { width: 160px; padding-left: 5px; }
.status .s2 { width: 220px; padding-left: 5px; }
.status .s3 { width: 197px; padding-left: 5px; }
.status .s4 { flex: 1; justify-content: center; }
.status .s5 { width: 46px; }
.status .s6 { width: 30px; padding-left: 6px; }
.status .s7 { width: 20px; }
.status .s8 { width: 186px; justify-content: center; }
.status .s9 { width: 96px; justify-content: space-between; padding: 0 3px 0 5px; }
.status .s10 { width: 32px; padding-left: 5px; border: 0; }
.sm { width: 20px; height: 12px; fill: none; }
.s9 button { width: 8px; font-size: 13px; font-weight: 700; color: #222; }
.s9 input { appearance: none; width: 65px; height: 8px; background: linear-gradient(#8b8b8b, #8b8b8b) center / 100% 1px no-repeat; }
.s9 input::-webkit-slider-thumb { appearance: none; width: 3px; height: 7px; background: #fff; border: 1px solid #444; }
```
